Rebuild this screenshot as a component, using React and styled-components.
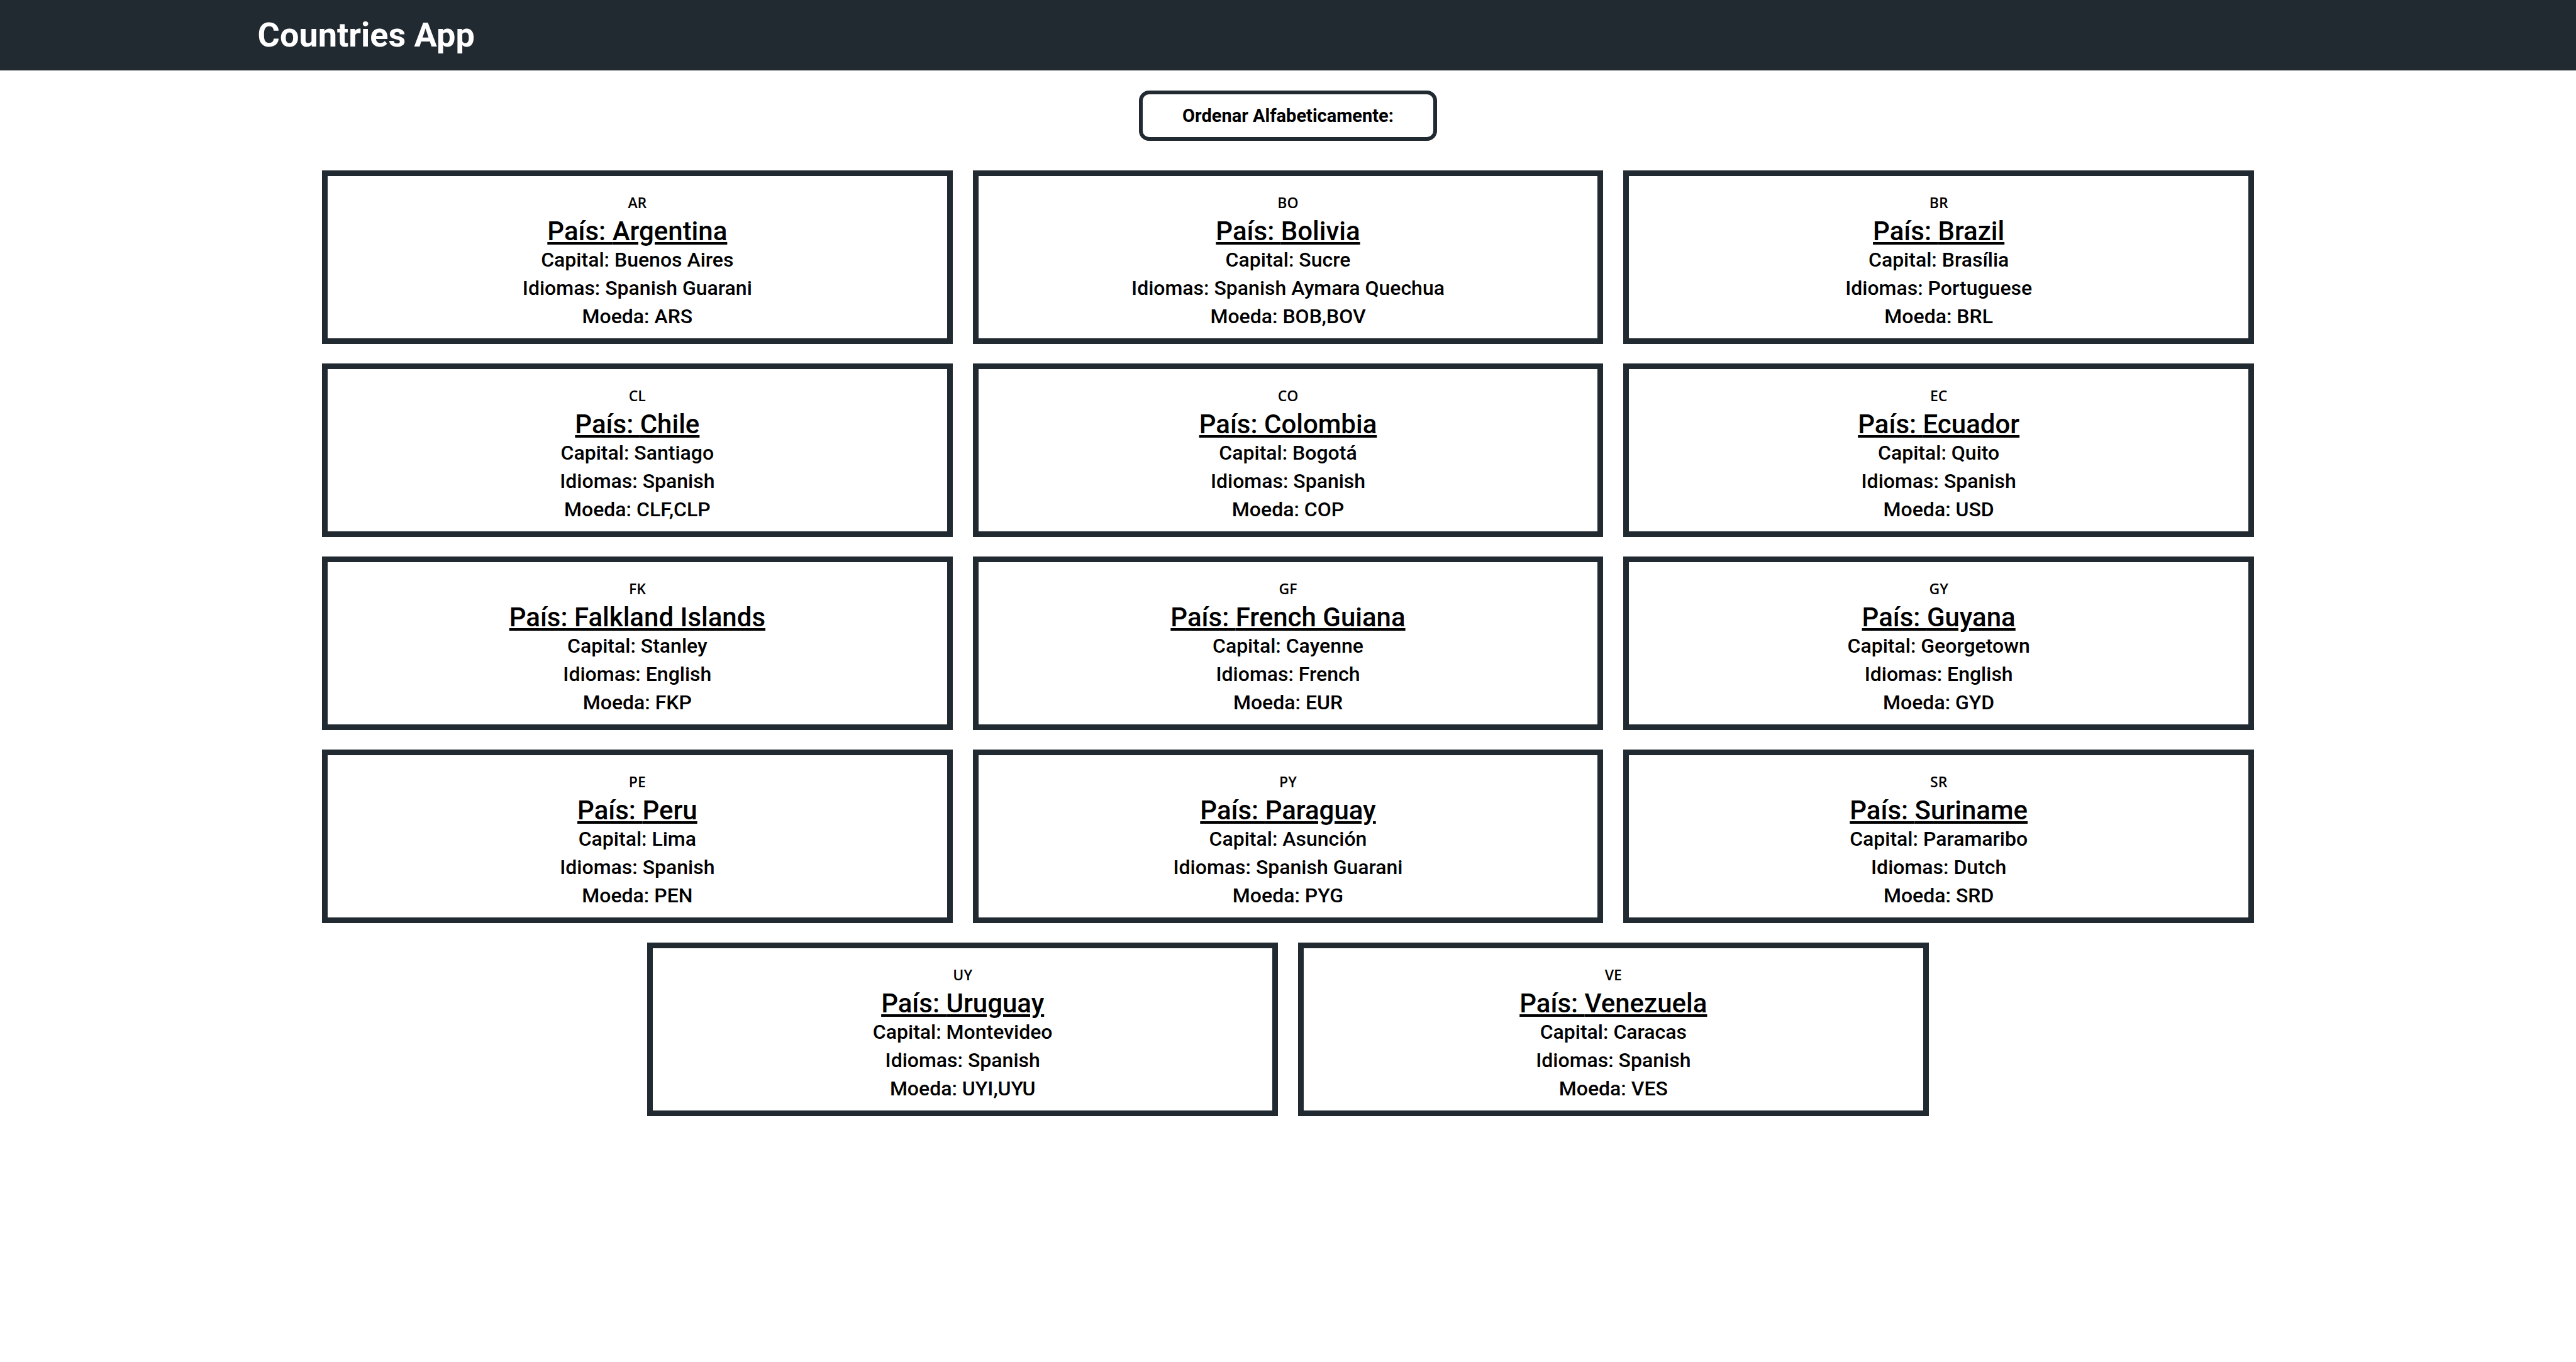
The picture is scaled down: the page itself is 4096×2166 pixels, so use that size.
import React, { useState } from "react";
import styled, { createGlobalStyle } from "styled-components";

const ink = "#222a31";

const GlobalStyle = createGlobalStyle`
  *, *::before, *::after {
    box-sizing: border-box;
    margin: 0;
    padding: 0;
  }

  body {
    background: #fff;
    color: #000;
    font-family: Roboto, "Liberation Sans", sans-serif;
    font-size: 32px;
  }
`;

const Header = styled.header`
  display: flex;
  align-items: center;
  padding: 24px 10%;
  background: ${ink};
`;

const Title = styled.h1`
  color: #fff;
  font-size: 54px;
  font-weight: 700;
  line-height: 64px;
`;

const Main = styled.main`
  display: flex;
  flex-direction: column;
  align-items: center;
  gap: 47px;
  padding: 32px 0;
`;

const SortButton = styled.button`
  padding: 14px 63px;
  border: 6px solid ${ink};
  border-radius: 16px;
  background: #fff;
  color: #000;
  font-family: inherit;
  font-size: 29px;
  font-weight: 700;
  line-height: 40px;
  cursor: pointer;
`;

const CountryList = styled.ul`
  display: flex;
  flex-wrap: wrap;
  justify-content: center;
  gap: 31px 32px;
  width: 75%;
  list-style: none;
`;

const Card = styled.li`
  width: calc((100% - 64px) / 3);
  padding: 20px 16px 12px;
  border: 9px solid ${ink};
  font-weight: 500;
  text-align: center;
`;

const Code = styled.p`
  font-family: "Open Sans", "Noto Sans", sans-serif;
  font-size: 23px;
  font-weight: 600;
  line-height: 45px;
`;

const Name = styled.h2`
  font-size: 42px;
  font-weight: 500;
  line-height: 46px;
  text-decoration: underline;
`;

const Detail = styled.p`
  line-height: 45px;
`;

const countries = [
  { code: "AR", name: "Argentina", capital: "Buenos Aires", languages: "Spanish Guarani", currency: "ARS" },
  { code: "BO", name: "Bolivia", capital: "Sucre", languages: "Spanish Aymara Quechua", currency: "BOB,BOV" },
  { code: "BR", name: "Brazil", capital: "Brasília", languages: "Portuguese", currency: "BRL" },
  { code: "CL", name: "Chile", capital: "Santiago", languages: "Spanish", currency: "CLF,CLP" },
  { code: "CO", name: "Colombia", capital: "Bogotá", languages: "Spanish", currency: "COP" },
  { code: "EC", name: "Ecuador", capital: "Quito", languages: "Spanish", currency: "USD" },
  { code: "FK", name: "Falkland Islands", capital: "Stanley", languages: "English", currency: "FKP" },
  { code: "GF", name: "French Guiana", capital: "Cayenne", languages: "French", currency: "EUR" },
  { code: "GY", name: "Guyana", capital: "Georgetown", languages: "English", currency: "GYD" },
  { code: "PE", name: "Peru", capital: "Lima", languages: "Spanish", currency: "PEN" },
  { code: "PY", name: "Paraguay", capital: "Asunción", languages: "Spanish Guarani", currency: "PYG" },
  { code: "SR", name: "Suriname", capital: "Paramaribo", languages: "Dutch", currency: "SRD" },
  { code: "UY", name: "Uruguay", capital: "Montevideo", languages: "Spanish", currency: "UYI,UYU" },
  { code: "VE", name: "Venezuela", capital: "Caracas", languages: "Spanish", currency: "VES" },
];

export default function App() {
  const [sorted, setSorted] = useState(false);
  const shown = sorted
    ? [...countries].sort((a, b) => a.name.localeCompare(b.name))
    : countries;

  return (
    <>
      <GlobalStyle />
      <Header>
        <Title>Countries App</Title>
      </Header>
      <Main>
        <SortButton type="button" onClick={() => setSorted(!sorted)}>
          Ordenar Alfabeticamente:
        </SortButton>
        <CountryList>
          {shown.map((country) => (
            <Card key={country.code}>
              <Code>{country.code}</Code>
              <Name>País: {country.name}</Name>
              <Detail>Capital: {country.capital}</Detail>
              <Detail>Idiomas: {country.languages}</Detail>
              <Detail>Moeda: {country.currency}</Detail>
            </Card>
          ))}
        </CountryList>
      </Main>
    </>
  );
}
